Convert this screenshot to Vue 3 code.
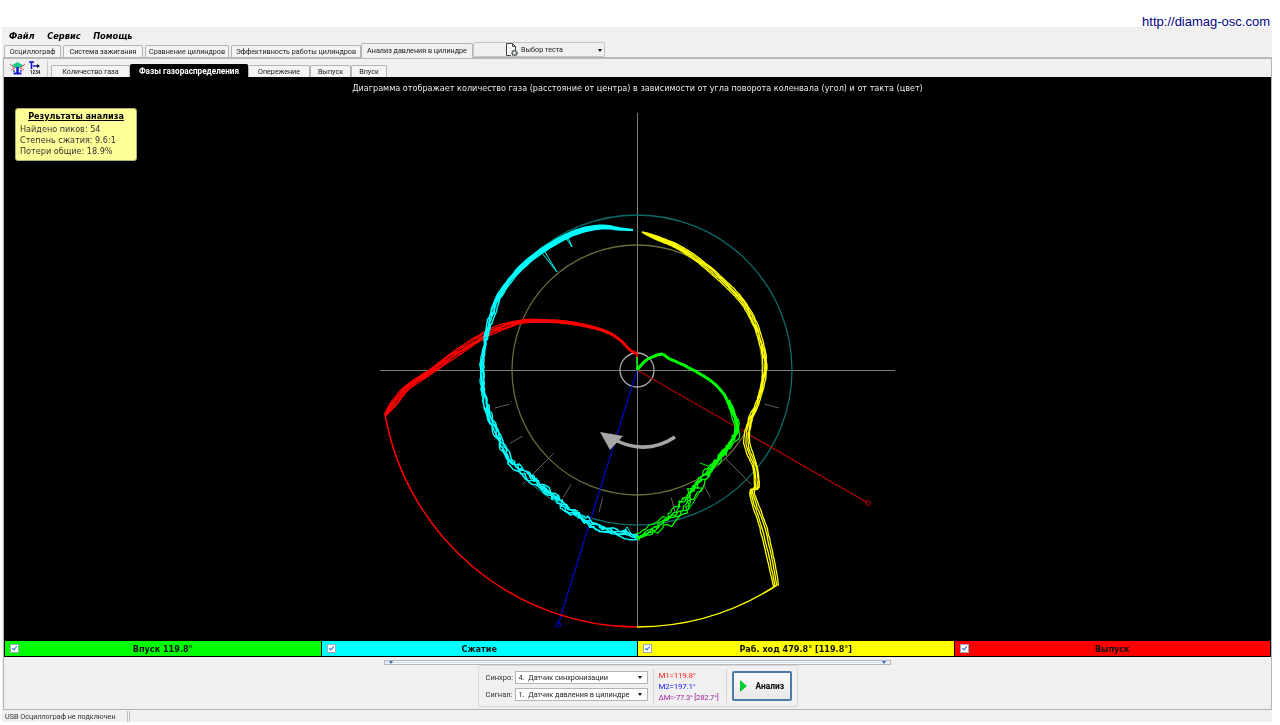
<template>
  <div class="screen">
    <div class="topline">
      <a class="site">http://diamag-osc.com</a>
    </div>

    <div class="window">
      <nav class="menu">
        <span v-for="item in menu" :key="item">{{ item }}</span>
      </nav>

      <div class="tabs">
        <span
          v-for="tab in tabs"
          :key="tab.label"
          class="tab"
          :class="{ 'tab--active': tab.active }"
          :style="{ width: tab.w + 'px' }"
        >{{ tab.label }}</span>
        <div class="test-select">
          <svg class="doc-icon" viewBox="0 0 14 14" width="14" height="14">
            <path d="M1.500 .5h6l3 3v4M7.500 .5v3h3M1.500 .5v12h4.500" fill="#fff" stroke="#444" stroke-width="1" />
            <circle cx="9.500" cy="10" r="2.600" fill="#9aa" stroke="#333" stroke-width="1.200" stroke-dasharray="1.2 .6" />
            <circle cx="9.500" cy="10" r="1" fill="#fff" />
          </svg>
          <span>Выбор теста</span>
          <i class="caret"></i>
        </div>
      </div>

      <main class="page">
        <div class="subbar">
          <div class="tools">
            <svg viewBox="0 0 15 14" width="15" height="14">
              <path d="M1.500 4.500L7.500 1L13.500 4.500L10 7H5z" fill="#1cc98a" />
              <path d="M0 3l5 4.500M15 3l-5 4.500M1 9l4-2M14 9l-4-2" stroke="#ea4a5a" stroke-width="1" />
              <path d="M7.500 6v6" stroke="#1818d0" stroke-width="2.500" />
              <path d="M3.500 12.500h8" stroke="#1818d0" stroke-width="2" />
              <path d="M3 10h2M10 10h2" stroke="#3050e0" stroke-width="1.500" />
            </svg>
            <svg viewBox="0 0 12 14" width="12" height="14">
              <path d="M0 1h5M2.500 1v7M4 5h6" stroke="#1010c8" stroke-width="1.600" fill="none" />
              <path d="M8 3l3 2-3 2z" fill="#111" />
              <text x="1" y="13" class="tiny">1234</text>
            </svg>
          </div>
          <div class="subtabs">
            <span
              v-for="tab in subTabs"
              :key="tab.label"
              class="subtab"
              :class="{ 'subtab--active': tab.active }"
              :style="{ width: tab.w + 'px' }"
            >{{ tab.label }}</span>
          </div>
        </div>

        <section class="canvas">
          <p class="caption">Диаграмма отображает количество газа (расстояние от центра) в зависимости от угла поворота коленвала (угол) и от такта (цвет)</p>

          <aside class="results">
            <strong>Результаты анализа</strong>
            <span>Найдено пиков: 54</span>
            <span>Степень сжатия: 9.6:1</span>
            <span>Потери общие: 18.9%</span>
          </aside>

          <svg class="plot" viewBox="4 77 1267 563" width="1267" height="563">
            <g fill="none">
              <path d="M380 370.500H895M637.500 113V627" stroke="#7c7c7c" />
              <circle cx="637" cy="370" r="155" stroke="#0b6a6a" stroke-width="1.300" />
              <circle cx="637" cy="370" r="125" stroke="#6c6a3c" stroke-width="1.300" />
              <path :d="ticks" stroke="#5f5f5f" />
              <circle cx="637" cy="370" r="17" stroke="#a8a8a8" stroke-width="1.300" />

              <path d="M637 370L868 503" stroke="#b00000" stroke-width="1.200" />
              <circle cx="868" cy="503" r="2.500" stroke="#b00000" />
              <path d="M637 370L558 625" stroke="#0000d0" stroke-width="1.200" />
              <circle cx="558" cy="625" r="2.500" stroke="#0000d0" />

              <path d="M385 414A257 257 0 0 0 637 627" stroke="#ff0000" stroke-width="1.500" />
              <path d="M637 627A257 257 0 0 0 777 585" stroke="#ffff00" stroke-width="1.500" />

              <path
                v-for="(trace, i) in traces"
                :key="i"
                :d="trace.d"
                :stroke="trace.color"
                :stroke-width="trace.width"
                stroke-linejoin="round"
              />

              <path d="M675 437Q648 455 617 441" stroke="#a6a6a6" stroke-width="3.500" />
            </g>
            <path d="M600 432L623 436L610 450z" fill="#a6a6a6" />
          </svg>
        </section>

        <div class="strokes">
          <div v-for="cell in strokes" :key="cell.label" class="stroke" :class="cell.cls">
            <i class="check"></i>
            <span>{{ cell.label }}</span>
          </div>
        </div>

        <div class="splitter"><i></i><i></i></div>

        <div class="panel">
          <div class="selects">
            <label v-for="row in selects" :key="row.label" class="select-row">
              <span>{{ row.label }}</span>
              <div class="combo">
                <span>{{ row.value }}</span>
                <i class="caret"></i>
              </div>
            </label>
          </div>
          <div class="markers">
            <span class="m1">M1=119.8°</span>
            <span class="m2">M2=197.1°</span>
            <span class="dm">ΔM=-77.3° [282.7°]</span>
          </div>
          <button class="run">
            <i class="run-icon"></i>
            <span>Анализ</span>
          </button>
        </div>
      </main>

      <footer class="status">
        <span class="status-text">USB Осциллограф не подключен</span>
        <span class="status-rest"></span>
      </footer>
    </div>
  </div>
</template>

<script setup>
const menu = ['Файл', 'Сервис', 'Помощь']

const tabs = [
  { label: 'Осциллограф', w: 57 },
  { label: 'Система зажигания', w: 80 },
  { label: 'Сравнение цилиндров', w: 84 },
  { label: 'Эффективность работы цилиндров', w: 130 },
  { label: 'Анализ давления в цилиндре', w: 112, active: true },
]

const subTabs = [
  { label: 'Количество газа', w: 79 },
  { label: 'Фазы газораспределения', w: 118, active: true },
  { label: 'Опережение', w: 62 },
  { label: 'Выпуск', w: 41 },
  { label: 'Впуск', w: 36 },
]

const strokes = [
  { label: 'Впуск 119.8°', cls: 'green' },
  { label: 'Сжатие', cls: 'cyan' },
  { label: 'Раб. ход 479.8° [119.8°]', cls: 'yellow' },
  { label: 'Выпуск', cls: 'red' },
]

const selects = [
  { label: 'Синхро:', value: '4.  Датчик синхронизации' },
  { label: 'Сигнал:', value: '1.  Датчик давления в цилиндре' },
]

// radial marks between the two rings, lower half only
const ticks = (() => {
  const out = []
  for (const deg of [15, 30, 45, 60, 75, 105, 120, 135, 150, 165]) {
    const a = (deg * Math.PI) / 180
    const long = deg === 45 || deg === 135
    const r1 = long ? 117 : 132
    const r2 = long ? 162 : 147
    out.push(
      `M${(637 + r1 * Math.cos(a)).toFixed(1)} ${(370 + r1 * Math.sin(a)).toFixed(1)}` +
        `L${(637 + r2 * Math.cos(a)).toFixed(1)} ${(370 + r2 * Math.sin(a)).toFixed(1)}`,
    )
  }
  return out.join('')
})()

let seed = 20240
function rnd() {
  seed = (seed + 0x6d2b79f5) | 0
  let t = Math.imul(seed ^ (seed >>> 15), 1 | seed)
  t = (t + Math.imul(t ^ (t >>> 7), 61 | t)) ^ t
  return ((t ^ (t >>> 14)) >>> 0) / 4294967296 - 0.5
}

function traceCopies(points, copies, step = 3) {
  const dense = []
  const at = (i) => points[Math.max(0, Math.min(points.length - 1, i))]
  for (let i = 0; i < points.length - 1; i++) {
    const [p0, p1, p2, p3] = [at(i - 1), at(i), at(i + 1), at(i + 2)]
    const len = Math.hypot(p2[0] - p1[0], p2[1] - p1[1])
    const count = Math.max(1, Math.round(len / step))
    for (let k = 0; k <= count; k++) {
      if (k === count && i < points.length - 2) break
      const t = k / count
      const cr = (a, b, c, d) =>
        0.5 * (2 * b + (c - a) * t + (2 * a - 5 * b + 4 * c - d) * t * t + (3 * b - a - 3 * c + d) * t * t * t)
      const tx = p2[0] - p0[0]
      const ty = p2[1] - p0[1]
      const tl = Math.hypot(tx, ty) || 1
      dense.push({
        x: cr(p0[0], p1[0], p2[0], p3[0]),
        y: cr(p0[1], p1[1], p2[1], p3[1]),
        nx: -ty / tl,
        ny: tx / tl,
        s: p1[2] + (p2[2] - p1[2]) * t,
        n: p1[3] + (p2[3] - p1[3]) * t,
      })
    }
  }
  const out = []
  for (let c = 0; c < copies; c++) {
    const base = copies > 1 ? (c / (copies - 1)) * 2 - 1 : 0
    let wander = 0
    let d = ''
    dense.forEach((p, i) => {
      wander = wander * 0.75 + rnd() * p.n * 1.4
      const off = base * p.s + wander
      const x = p.x + p.nx * off + rnd() * p.n
      const y = p.y + p.ny * off + rnd() * p.n
      d += `${i ? 'L' : 'M'}${x.toFixed(1)} ${y.toFixed(1)}`
    })
    out.push(d)
  }
  return out.join('')
}

const red = [
  [385, 415, 1, 0.2], [395, 402, 3, 0.3], [408, 387, 2.600, 0.3], [430, 372, 2.200, 0.3],
  [458, 352, 3, 0.3], [485, 335, 3, 0.3], [500, 328, 3, 0.3], [520, 322, 1.800, 0.2],
  [537, 321, 1.400, 0.1], [563, 322, 1.200, 0.1], [587, 326, 1.100, 0.1], [607, 332, 1, 0.1],
  [620, 340, 0.8, 0], [630, 350, 0.6, 0], [637, 353, 0.4, 0],
]
const cyan = [
  [637, 538, 2, 3], [627, 535, 2, 2], [600, 528, 2, 2], [577, 515, 2, 3.400],
  [553, 497, 2, 2.800], [530, 478, 2, 2.800], [513, 463, 2, 2.200], [503, 447, 2, 1.800],
  [490, 417, 1.600, 1.300], [485, 400, 1.400, 1.200], [482, 370, 1.200, 1.100], [487, 333, 1.400, 1.100],
  [493, 312, 1.800, 0.9], [500, 295, 2, 0.5], [517, 272, 2, 0.3], [540, 252, 2, 0.3],
  [563, 238, 2, 0.2], [583, 230, 2.300, 0.1], [603, 227, 1.800, 0], [620, 229, 1, 0], [633, 230, 0.2, 0],
]
const green = [
  [728, 400, 1.500, 0.3], [737, 427, 2.200, 1.200], [732, 442, 2.500, 2.500], [720, 457, 2.500, 3], [710, 470, 2.500, 3],
  [693, 490, 3, 3.500], [680, 510, 3, 3.500], [667, 520, 3, 3], [653, 530, 3, 3], [637, 537, 2.500, 2],
]
const greenHead = [
  [637, 370, 0, 0], [644, 362, 0, 0], [650, 358, 0, 0], [662, 354, 0, 0], [668, 358, 0, 0.1], [687, 367, 0, 0.2],
  [710, 380, 0, 0.3], [722, 392, 0, 0.3], [731, 408, 0, 0.4], [737, 427, 0, 0.5], [731, 444, 0, 0.6], [720, 458, 0, 0.8], [708, 476, 0, 0.8],
]
const yellow = [
  [642, 232, 0.2, 0], [657, 238, 1.800, 0], [680, 248, 2, 0.1], [707, 267, 2.200, 0.2], [730, 288, 2.200, 0.3],
  [747, 308, 2.200, 0.4], [760, 338, 2, 0.5], [765, 368, 1.800, 0.5], [758, 402, 1.800, 0.5], [750, 420, 2.200, 0.5],
  [747, 443, 2.800, 0.5], [755, 467, 2.500, 0.5], [757, 487, 2.500, 0.4], [752, 493, 2.500, 0.3], [763, 527, 3.500, 0.4],
  [772, 565, 3.500, 0.3], [776, 586, 2.500, 0.1],
]

const traces = [
  { d: traceCopies(red, 5), color: '#ff0000', width: 1.3 },
  { d: traceCopies([[530, 321, 0, 0], [563, 322, 0, 0], [587, 326, 0, 0], [607, 332, 0, 0], [620, 340, 0, 0], [630, 350, 0, 0], [637, 354, 0, 0]], 1), color: '#ff0000', width: 2.4 },
  { d: 'M637 353L637 357', color: '#ff0000', width: 1.6 },
  { d: 'M637 370L637 357', color: '#00ff00', width: 1.6 },
  { d: traceCopies(cyan, 5), color: '#00ffff', width: 1.4 },
  { d: 'M542 253L557 272L545 252M568 237L572 247L566 238M627 527L622 534M627 527L632 535', color: '#00ffff', width: 1 },
  { d: traceCopies(green, 5), color: '#00ff00', width: 1.2 },
  { d: 'M683 500L693 488L702 488L693 503L688 510M700 463L708 466L716 461', color: '#00ff00', width: 1 },
  { d: traceCopies(greenHead, 1), color: '#00ff00', width: 3 },
  { d: traceCopies(yellow, 4), color: '#ffff00', width: 1.3 },
]
</script>

<style scoped>
.screen {
  width: 1280px;
  height: 725px;
  overflow: hidden;
  background: #fff;
  font-family: Roboto, "Liberation Sans", Arial, sans-serif;
}

.topline {
  height: 27px;
  padding-right: 10px;
  display: flex;
  justify-content: flex-end;
  align-items: flex-end;
}

.site {
  font: 13px/14px "Liberation Sans", Arial, sans-serif;
  margin-bottom: -2px;
  position: relative;
  color: #000080;
}

.window {
  width: 1270px;
  height: 695px;
  margin-left: 2px;
  background: #f0f0f0;
  display: flex;
  flex-direction: column;
}

.menu {
  height: 16px;
  padding-left: 7px;
  display: flex;
  align-items: center;
  gap: 12.500px;
  font: italic bold 9.200px "DejaVu Sans Condensed", "DejaVu Sans", sans-serif;
  font-stretch: condensed;
  color: #000;
}

.tabs {
  height: 14px;
  margin-left: 2px;
  display: flex;
  align-items: flex-end;
  gap: 2px;
  position: relative;
  z-index: 1;
}

.menu,
.tabs,
.subbar,
.caption,
.results,
.strokes,
.panel,
.status {
  filter: blur(0.25px);
}

.tab,
.subtab {
  box-sizing: border-box;
  text-align: center;
  white-space: nowrap;
  font-size: 7.200px;
  color: #222;
  border: 1px solid #b4b4b4;
  border-bottom: 0;
  border-radius: 2px 2px 0 0;
  background: #f4f4f4;
}

.tab {
  height: 12px;
  line-height: 11px;
}

.tab--active {
  height: 15px;
  line-height: 13px;
  margin-bottom: -1px;
  margin-left: -2px;
  background: #f0f0f0;
}

.test-select {
  box-sizing: border-box;
  width: 132px;
  height: 15px;
  margin-left: -2px;
  padding-left: 31px;
  display: flex;
  align-items: center;
  gap: 2px;
  position: relative;
  font-size: 7.200px;
  color: #222;
  border: 1px solid #c4c4c4;
  border-radius: 2px;
  background: #f0f0f0;
}

.doc-icon {
  flex: none;
}

.caret {
  width: 0;
  height: 0;
  border: 2.500px solid transparent;
  border-top: 3px solid #111;
  border-bottom: 0;
}

.test-select .caret {
  position: absolute;
  right: 2px;
  top: 6px;
}

.page {
  box-sizing: border-box;
  height: 653px;
  margin-left: 1px;
  border: 1px solid #b4b4b4;
  border-top: 2px solid #b8b8b8;
  display: flex;
  flex-direction: column;
}

.subbar {
  height: 18px;
  display: flex;
  align-items: flex-end;
  flex: none;
}

.tools {
  box-sizing: border-box;
  width: 44px;
  height: 17px;
  padding: 0 3px 2px 6px;
  display: flex;
  align-items: center;
  gap: 4px;
  border-right: 1px solid #c8c8c8;
}

.tiny {
  font-size: 4.500px;
  font-weight: bold;
  fill: #111;
  stroke: none;
}

.subtabs {
  margin-left: 3px;
  display: flex;
  align-items: flex-end;
}

.subtab {
  height: 12px;
  line-height: 11px;
}

.subtab--active {
  height: 13px;
  line-height: 12px;
  font-size: 8.200px;
  background: #000;
  border-color: #000;
  color: #fff;
  font-weight: bold;
}

.canvas {
  flex: none;
  height: 563px;
  position: relative;
  background: #000;
  overflow: hidden;
}

.plot {
  display: block;
}

.caption {
  position: absolute;
  top: 6px;
  left: 0;
  right: 0;
  margin: 0;
  text-align: center;
  font: 9px "DejaVu Sans Condensed", "DejaVu Sans", sans-serif;
  font-stretch: condensed;
  color: #e8e8e8;
}

.results {
  position: absolute;
  left: 11px;
  top: 31px;
  box-sizing: border-box;
  width: 122px;
  height: 53px;
  padding: 2px 4px;
  display: flex;
  flex-direction: column;
  background: #ffff99;
  border: 1px solid #b0b070;
  border-radius: 3px;
  font: 9px/11px "DejaVu Sans Condensed", "DejaVu Sans", sans-serif;
  font-stretch: condensed;
  color: #333;
}

.results strong {
  margin-bottom: 2px;
  text-align: center;
  text-decoration: underline;
  color: #000;
}

.strokes {
  flex: none;
  box-sizing: border-box;
  height: 17px;
  padding: 1px;
  display: grid;
  grid-template-columns: repeat(4, 1fr);
  gap: 1px;
  background: #000;
}

.stroke {
  position: relative;
  display: flex;
  align-items: center;
  justify-content: center;
  font: bold 9px "DejaVu Sans Condensed", "DejaVu Sans", sans-serif;
  font-stretch: condensed;
  color: #111;
}

.green { background: #00ff00; }
.cyan { background: #00ffff; }
.yellow { background: #ffff00; }
.red { background: #ff0000; }

.check {
  position: absolute;
  left: 5px;
  top: 3px;
  box-sizing: border-box;
  width: 9px;
  height: 9px;
  background: #fff;
  border: 1px solid #9ab;
}

.check::after {
  content: "";
  position: absolute;
  left: 2px;
  top: 0;
  width: 2px;
  height: 4px;
  border: solid #2a6fd8;
  border-width: 0 1px 1px 0;
  transform: rotate(40deg);
}

.splitter {
  flex: none;
  box-sizing: border-box;
  width: 507px;
  height: 5px;
  margin: 3px auto 0;
  display: flex;
  justify-content: space-between;
  padding: 0 4px;
  border: 1px solid #b8b8b8;
  background: linear-gradient(90deg, #a8cdf0 1px, #f4f8fc 1px) center / 2px 1px repeat-x #f4f8fc;
}

.splitter i {
  width: 0;
  height: 0;
  border: 2px solid transparent;
  border-top: 3px solid #2a70c8;
  border-bottom: 0;
}

.panel {
  flex: none;
  box-sizing: border-box;
  width: 320px;
  height: 42px;
  margin: 0 auto;
  padding: 0 4px 0 7px;
  display: flex;
  align-items: center;
  border: 1px solid #d8d8d8;
  border-radius: 3px;
  font-size: 8px;
  color: #333;
}

.selects {
  display: flex;
  flex-direction: column;
  gap: 4px;
}

.select-row {
  display: flex;
  align-items: center;
  gap: 2px;
}

.select-row > span {
  width: 27px;
  font-size: 7.500px;
  white-space: nowrap;
}

.combo {
  box-sizing: border-box;
  width: 133px;
  height: 13px;
  padding: 0 5px 0 3px;
  display: flex;
  align-items: center;
  justify-content: space-between;
  white-space: pre;
  font-size: 7.300px;
  background: #fff;
  border: 1px solid #b4b4b4;
  color: #222;
}

.markers {
  box-sizing: border-box;
  height: 34px;
  margin-left: 5px;
  padding: 0 6px 0 5px;
  width: 74px;
  display: flex;
  flex-direction: column;
  justify-content: center;
  line-height: 11px;
  white-space: nowrap;
  letter-spacing: -0.2px;
  border: solid #d4d4d4;
  border-width: 0 1px;
}

.m1 { color: #ff2020; }
.m2 { color: #2020ff; }
.dm { color: #a020a0; font-size: 7.600px; }

.run {
  box-sizing: border-box;
  width: 60px;
  height: 30px;
  margin-left: 5px;
  padding: 0 0 0 6px;
  display: flex;
  align-items: center;
  gap: 9px;
  border: 2px solid #4c7ba8;
  border-radius: 2px;
  background: linear-gradient(#fbfbfb, #e8e8e8);
  font: bold 8.400px Roboto, "Liberation Sans", sans-serif;
  color: #000;
}

.run-icon {
  width: 0;
  height: 0;
  border-left: 7px solid #00cc33;
  border-top: 6px solid transparent;
  border-bottom: 6px solid transparent;
}

.status {
  flex: 1;
  margin-top: 1px;
  display: flex;
  font-size: 7.200px;
  line-height: 11px;
  color: #333;
}

.status-text {
  width: 126px;
  padding-left: 3px;
  box-sizing: border-box;
  border-right: 1px solid #c0c0c0;
  white-space: nowrap;
}

.status-rest {
  flex: 1;
  margin-left: 1px;
  border-left: 1px solid #c0c0c0;
}
</style>
